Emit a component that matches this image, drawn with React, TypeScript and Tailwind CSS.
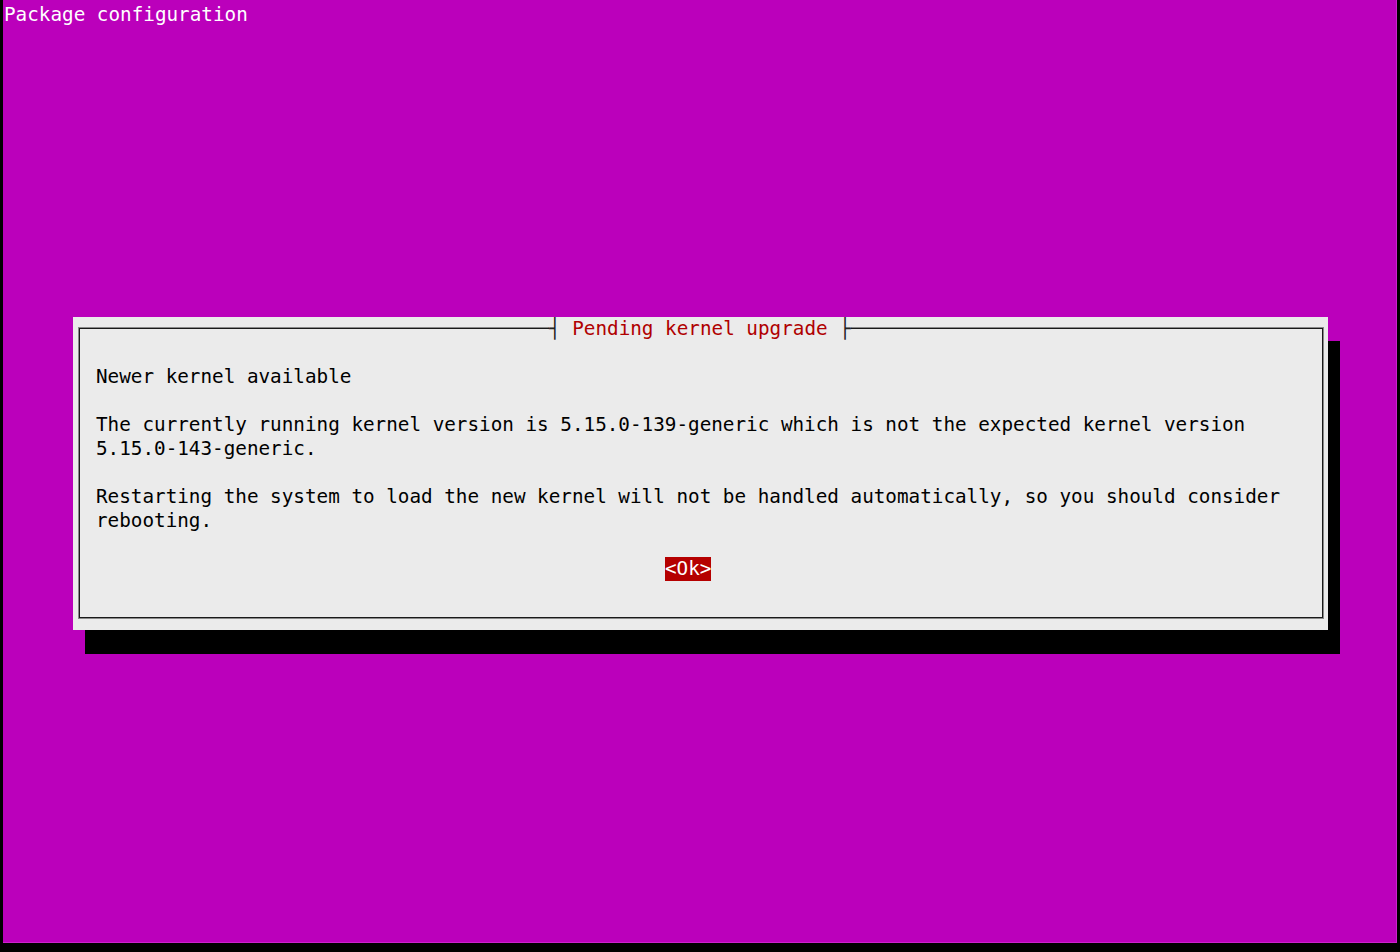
export default function App() {
  const mono = "font-['DejaVu_Sans_Mono','Liberation_Mono',monospace] text-[19.3px] leading-[24px]"

  return (
    <div className="w-[1400px] h-[952px] bg-black">
      <div className={`ml-[3px] w-[1394px] h-[943px] bg-[#bb00bb] border-r border-b border-[#cc22cc] ${mono}`}>
        {/* titre du terminal */}
        <div className="pt-[3px] pl-[1px] text-white whitespace-pre">Package configuration</div>

        {/* boîte de dialogue */}
        <div className="relative mt-[290px] ml-[70px] w-[1255px] h-[313px] bg-[#ebebeb] pt-[11px] pl-[6px] pr-[5px] pb-[12px] shadow-[12px_24px_0_0_#000]">
          <div className="h-full border border-[#1a1a1a] shadow-[0_0_0_1px_#8a8a8a] pt-[36px] pl-[16px] text-black whitespace-pre">
            <p>Newer kernel available</p>
            <p className="mt-[24px]">
              The currently running kernel version is 5.15.0-139-generic which is not the expected kernel version
            </p>
            <p>5.15.0-143-generic.</p>
            <p className="mt-[24px]">
              Restarting the system to load the new kernel will not be handled automatically, so you should consider
            </p>
            <p>rebooting.</p>
            <div className="mt-[24px] ml-[569px] flex">
              <span className="bg-[#b50000] text-white">&lt;Ok&gt;</span>
            </div>
          </div>

          {/* titre posé sur la bordure */}
          <div className="absolute top-0 left-[476px] bg-[#ebebeb] whitespace-pre">
            <span className="text-[#222]">┤</span>
            <span className="text-[#b00000]"> Pending kernel upgrade </span>
            <span className="text-[#222]">├</span>
          </div>
        </div>
      </div>
    </div>
  )
}
